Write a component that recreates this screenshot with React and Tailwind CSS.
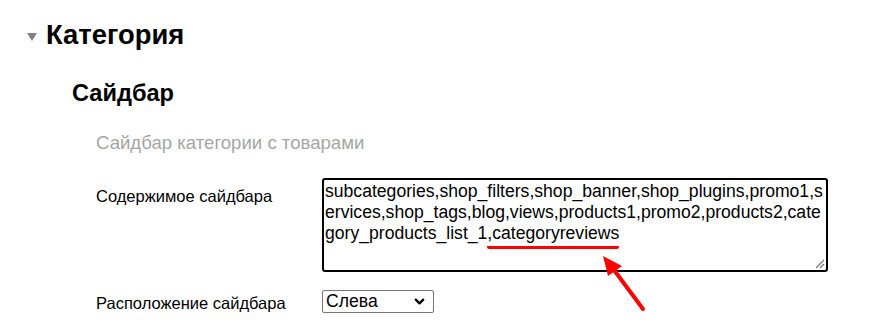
import { ChevronDown } from 'lucide-react'

const Row = ({ label, children, className = '' }) => (
  <div className={`flex items-start ${className}`}>
    <div className="w-[226px] shrink-0 text-[16.5px] text-black">{label}</div>
    {children}
  </div>
)

export default function App() {
  return (
    <div className="relative w-[874px] h-[334px] bg-white overflow-hidden font-['Liberation_Sans',Arial,sans-serif]">
      <div className="flex items-center pt-[19px] pl-[27px]">
        <span className="w-0 h-0 border-x-[5px] border-x-transparent border-t-[8px] border-t-[#808080] mr-[9px] mt-[3px]" />
        <h1 className="text-[27.4px] leading-[32px] font-bold text-black">Категория</h1>
      </div>

      <h2 className="pl-[72px] mt-[28px] text-[23.6px] leading-[28px] font-bold text-black">Сайдбар</h2>

      <div className="pl-[96px]">
        <p className="mt-[25px] text-[18.6px] leading-[22px] text-[#a6a6a6]">Сайдбар категории с товарами</p>

        <Row label={<span className="block pt-[6px]">Содержимое сайдбара</span>} className="mt-[24px]">
          <div className="relative w-[506px] h-[94px] border-2 border-black rounded-[3px] px-[1px] pt-[1px] text-[17.6px] leading-[21px] text-black whitespace-nowrap">
            <div>subcategories,shop_filters,shop_banner,shop_plugins,promo1,s</div>
            <div>ervices,shop_tags,blog,views,products1,promo2,products2,cate</div>
            <div>
              gory_products_list_1
              <span className="border-b-[3px] border-[#ff0000] pb-[3px] rounded-b-[2px]">,categoryreviews</span>
            </div>
            <svg className="absolute right-[1px] bottom-[1px]" width="11" height="11" viewBox="0 0 11 11">
              <path d="M10 2 L2 10 M10 6 L6 10" stroke="#777" strokeWidth="1.2" />
            </svg>
          </div>
        </Row>

        <Row label={<span className="block pt-[1px]">Расположение сайдбара</span>} className="mt-[18px]">
          <div className="flex items-center justify-between w-[112px] h-[23px] border border-[#767676] rounded-[2px] pl-[3px] pr-[6px] text-[17.6px] text-black">
            <span>Слева</span>
            <ChevronDown size={15} strokeWidth={3.5} />
          </div>
        </Row>
      </div>

      <svg className="absolute left-0 top-0 pointer-events-none" width="874" height="334">
        <line x1="643" y1="309" x2="614" y2="270" stroke="#ff0000" strokeWidth="4" strokeLinecap="round" />
        <polygon points="603,256 622,266 608,276" fill="#ff0000" />
      </svg>
    </div>
  )
}
